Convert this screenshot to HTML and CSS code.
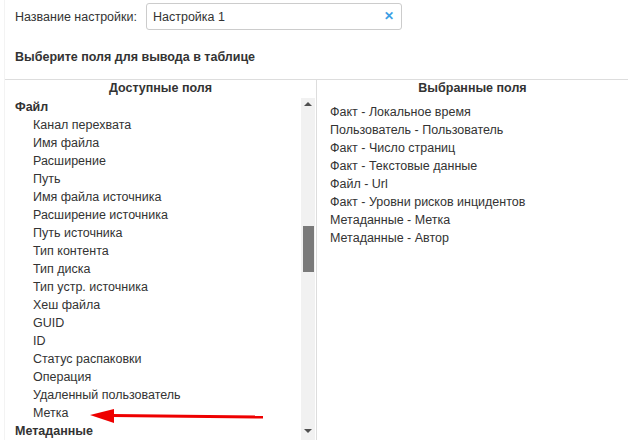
FILE: index.html
```html
<!DOCTYPE html>
<html lang="ru">
<head>
  <meta charset="UTF-8" />
  <title>Настройка таблицы</title>
  <link rel="stylesheet" href="styles.css">
</head>
<body>
  <div class="page">
    <div class="setting-row">
      <label class="setting-label">Название настройки:</label>
      <div class="setting-input">
        <span class="setting-value">Настройка 1</span>
        <span class="clear-btn">&#x2715;</span>
      </div>
    </div>

    <h3 class="section-title">Выберите поля для вывода в таблице</h3>

    <div class="columns">
      <div class="panel panel-left">
        <div class="panel-head">Доступные поля</div>
        <div class="panel-body">
          <ul class="field-list">
            <li class="group">Файл</li>
            <li>Канал перехвата</li>
            <li>Имя файла</li>
            <li>Расширение</li>
            <li>Путь</li>
            <li>Имя файла источника</li>
            <li>Расширение источника</li>
            <li>Путь источника</li>
            <li>Тип контента</li>
            <li>Тип диска</li>
            <li>Тип устр. источника</li>
            <li>Хеш файла</li>
            <li>GUID</li>
            <li>ID</li>
            <li>Статус распаковки</li>
            <li>Операция</li>
            <li>Удаленный пользователь</li>
            <li>Метка</li>
            <li class="group">Метаданные</li>
          </ul>
          <div class="scrollbar">
            <span class="arrow arrow-up"></span>
            <span class="thumb"></span>
            <span class="arrow arrow-down"></span>
          </div>
        </div>
      </div>

      <div class="panel panel-right">
        <div class="panel-head">Выбранные поля</div>
        <ul class="selected-list">
          <li>Факт - Локальное время</li>
          <li>Пользователь - Пользователь</li>
          <li>Факт - Число страниц</li>
          <li>Факт - Текстовые данные</li>
          <li>Файл - Url</li>
          <li>Факт - Уровни рисков инцидентов</li>
          <li>Метаданные - Метка</li>
          <li>Метаданные - Автор</li>
        </ul>
      </div>
    </div>

    <!-- annotation arrow -->
    <svg class="pointer" width="190" height="30" viewBox="0 0 190 30">
      <line x1="26" y1="12.5" x2="177" y2="14" stroke="#ee0000" stroke-width="3" />
      <polygon points="4,12 28,6 28,20" fill="#ee0000" />
    </svg>
  </div>
</body>
</html>
```

FILE: styles.css
```css
body {
  margin: 0;
  font-family: 'Liberation Sans', Arial, sans-serif;
  font-size: 12.5px;
  color: #333;
  background: #fff;
  overflow: hidden;
}

.page {
  position: relative;
  height: 440px;
  padding-top: 3px;
  box-sizing: border-box;
  border-left: 1px solid #f3f3f3;
  margin-left: 4px;
}

.setting-row {
  display: flex;
  align-items: center;
  padding-left: 10px;
}

.setting-label {
  width: 131px;
}

.setting-input {
  display: flex;
  align-items: center;
  justify-content: space-between;
  width: 256px;
  height: 27px;
  box-sizing: border-box;
  padding: 0 7px 0 6px;
  border: 1px solid #ccc;
  border-radius: 3px;
}

.clear-btn {
  color: #3a9ee4;
  font-size: 12px;
  font-weight: bold;
  margin-top: -1px;
}

.section-title {
  margin: 18px 0 13px 10px;
  font-size: 12.5px;
  line-height: 18px;
  font-weight: bold;
}

.columns {
  display: flex;
  border-top: 1px solid #ddd;
}

.panel-head {
  height: 18px;
  line-height: 17px;
  text-align: center;
  font-weight: bold;
}

.panel-left {
  width: 311px;
  border-right: 1px solid #ddd;
}

.panel-right {
  flex: 1;
}

.panel-body {
  display: flex;
  height: 342px;
}

.field-list,
.selected-list {
  list-style: none;
  margin: 0;
  padding: 0;
}

.field-list {
  flex: 1;
  overflow: hidden;
}

.field-list li {
  height: 18px;
  line-height: 18px;
  padding-left: 28px;
  white-space: nowrap;
}

.field-list li.group {
  padding-left: 10px;
  font-weight: bold;
}

.scrollbar {
  display: flex;
  flex-direction: column;
  align-items: center;
  width: 14px;
  margin-right: 1px;
  background: #f1f1f1;
}

.arrow {
  width: 0;
  height: 0;
  border-left: 4px solid transparent;
  border-right: 4px solid transparent;
}

.arrow-up {
  margin-top: 4px;
  border-bottom: 4px solid #505050;
}

.arrow-down {
  margin-top: auto;
  margin-bottom: 7px;
  border-top: 4px solid #505050;
}

.thumb {
  width: 11px;
  height: 46px;
  margin: 120px 0 0 1px;
  background: #7a7a7a;
}

.selected-list {
  padding: 5px 0 0 13px;
}

.selected-list li {
  height: 18px;
  line-height: 18px;
}

.pointer {
  position: absolute;
  left: 81px;
  top: 403px;
}
```
